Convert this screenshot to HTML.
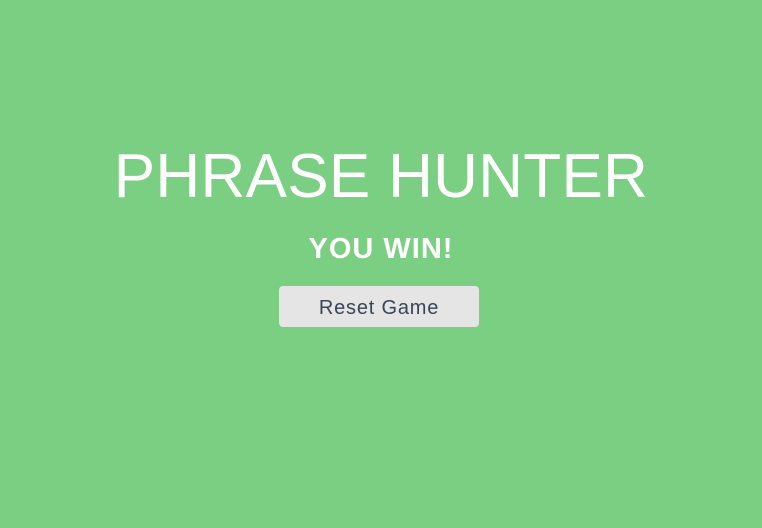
<!DOCTYPE html>
<html><head><style>
html,body{margin:0;padding:0;}
body{width:762px;height:528px;background:#7acf82;font-family:"Liberation Sans",sans-serif;position:relative;overflow:hidden;}
h1{position:absolute;left:0;width:762px;top:137px;margin:0;text-align:center;color:#fff;font-weight:normal;font-size:62px;line-height:80px;letter-spacing:0.3px;}
h2{position:absolute;left:0;width:762px;top:230px;margin:0;text-align:center;color:#fff;font-weight:bold;font-size:29px;line-height:38px;letter-spacing:1px;}
.btn{position:absolute;left:279px;top:286px;width:200px;height:41px;background:#e5e5e5;border-radius:4px;color:#3a4556;font-size:20px;line-height:44px;text-align:center;letter-spacing:0.8px;}
</style></head><body>
<h1>PHRASE HUNTER</h1>
<h2>YOU WIN!</h2>
<div class="btn">Reset Game</div>
</body></html>
